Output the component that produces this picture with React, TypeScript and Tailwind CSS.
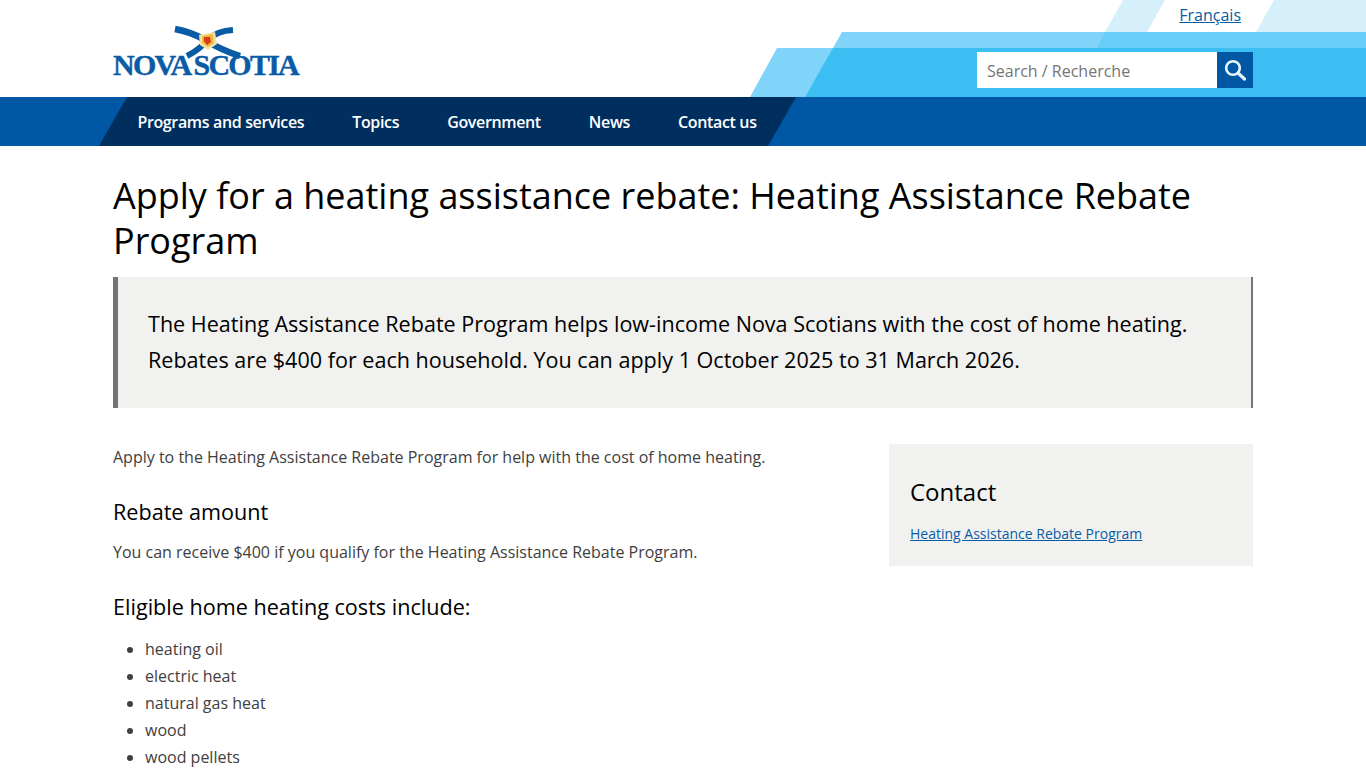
import React from 'react';

const navItems = ['Programs and services', 'Topics', 'Government', 'News', 'Contact us'];
const costs = ['heating oil', 'electric heat', 'natural gas heat', 'wood', 'wood pellets'];

const Logo = () => (
  <a href="#" className="relative block w-[188px] h-[52px] mt-[25px]">
    <svg className="absolute left-[60px] top-0" width="72" height="34" viewBox="0 0 72 34" fill="none">
      <path d="M2 4 Q 18 7 30 14 Q 48 25 67 31" stroke="#0a5ba5" strokeWidth="6.5" />
      <path d="M60 5 Q 44 6 36 14 Q 26 25 14 31" stroke="#0a5ba5" strokeWidth="6" />
      <path d="M26 10 L42 7 L44 19 L35 25 L27 20 Z" fill="#f6e2a6" />
      <path d="M29 11 L40 9 L41 18 L35 22 L29 18 Z" fill="#eeb93a" />
      <path d="M31 12 L37 12 L38 17 L34 20 L31 16 Z" fill="#d83a1e" />
    </svg>
    <span className="absolute left-0 top-[22px] whitespace-nowrap font-['Liberation_Serif',serif] font-bold text-[30px] leading-[36px] text-[#0a5ba5] tracking-[-1.75px] [-webkit-text-stroke:0.4px_#0a5ba5]">
      NOVA<span className="ml-[3px]">SCOTIA</span>
    </span>
  </a>
);

const SearchIcon = () => (
  <svg width="22" height="22" viewBox="0 0 22 22" fill="none" stroke="#e8f6fd" strokeWidth="2.6">
    <circle cx="9" cy="9" r="6.8" />
    <path d="M14 14 L20.5 20" strokeLinecap="round" strokeWidth="3.2" />
  </svg>
);

export default function App() {
  return (
    <div className="h-[768px] overflow-hidden bg-white font-['Open_Sans',sans-serif] text-[#404040]">
      {/* Header */}
      <header className="relative h-[97px] overflow-hidden">
        {/* Decorative stripes */}
        <div className="absolute inset-0 bg-[#d6f0fb] [clip-path:polygon(1123px_0,1165px_0,1147px_32px,1105px_32px)]" />
        <div className="absolute inset-0 bg-[#d6f0fb] [clip-path:polygon(1274px_0,1366px_0,1366px_32px,1256px_32px)]" />
        <div className="absolute inset-0 bg-[#80d4f9] [clip-path:polygon(777px_48px,835px_48px,805px_97px,750px_97px)]" />
        <div className="absolute inset-0 bg-[#80d4f9] [clip-path:polygon(842px_32px,1366px_32px,1366px_48px,833px_48px)]" />
        <div className="absolute inset-0 bg-[#68cdf8] [clip-path:polygon(1105px_32px,1366px_32px,1366px_48px,1097px_48px)]" />
        <div className="absolute inset-0 bg-[#3bbff3] [clip-path:polygon(833px_48px,1366px_48px,1366px_97px,805px_97px)]" />

        <div className="relative mx-auto w-[1140px] h-full flex justify-between">
          <Logo />
          <div className="flex flex-col items-end">
            <a href="#" className="mt-[3px] mr-[12px] text-[16px] leading-[24px] text-[#0a5ba5] underline">
              Français
            </a>
            <div className="mt-[25px] flex h-[36px]">
              <div className="w-[240px] bg-white pl-[10px] pt-[1px] text-[16px] leading-[36px] text-[#757575]">Search / Recherche</div>
              <button className="w-[36px] bg-[#0057a4] flex items-center justify-center">
                <SearchIcon />
              </button>
            </div>
          </div>
        </div>
      </header>

      {/* Nav */}
      <nav className="relative h-[49px] bg-[#0057a4] overflow-hidden">
        <div className="absolute inset-0 bg-[#002f5f] [clip-path:polygon(127px_0,796px_0,768px_49px,99px_49px)]" />
        <ul className="relative mx-auto w-[1140px] h-full flex items-center pl-[24.4px] gap-[48px] text-white text-[16px] tracking-[-0.35px]">
          {navItems.map((item) => (
            <li key={item} className="font-semibold">{item}</li>
          ))}
        </ul>
      </nav>

      {/* Page */}
      <main className="mx-auto w-[1140px]">
        <h1 className="pt-[27px] text-[35.98px] leading-[45px] text-black font-normal">
          Apply for a heating assistance rebate: Heating Assistance Rebate Program
        </h1>

        <div className="mt-[14px] h-[131px] bg-[#f1f1ef] border-l-[5px] border-l-[#757575] border-r-2 border-r-[#757575] pl-[30px] pt-[29px] text-[21.57px] leading-[36px] text-black">
          <p>The Heating Assistance Rebate Program helps low-income Nova Scotians with the cost of home heating.</p>
          <p>Rebates are $400 for each household. You can apply 1 October 2025 to 31 March 2026.</p>
        </div>

        <div className="mt-[36px] flex justify-between items-start">
          <div className="w-[740px] text-[16px] leading-[27px]">
            <p>Apply to the Heating Assistance Rebate Program for help with the cost of home heating.</p>
            <h2 className="mt-[26px] text-[21.6px] leading-[30px] text-black font-normal">Rebate amount</h2>
            <p className="mt-[12px]">You can receive $400 if you qualify for the Heating Assistance Rebate Program.</p>
            <h2 className="mt-[26px] text-[21.6px] leading-[30px] text-black font-normal">Eligible home heating costs include:</h2>
            <ul className="mt-[14px] pl-[32px] list-disc">
              {costs.map((c) => (
                <li key={c}>{c}</li>
              ))}
            </ul>
          </div>
          <aside className="w-[364px] h-[122px] bg-[#f1f1ef] pl-[21px] pt-[32px]">
            <h2 className="text-[24px] leading-[32px] text-black font-normal">Contact</h2>
            <a href="#" className="block mt-[16px] text-[14px] leading-[20px] text-[#0a5ba5] underline">
              Heating Assistance Rebate Program
            </a>
          </aside>
        </div>
      </main>
    </div>
  );
}
